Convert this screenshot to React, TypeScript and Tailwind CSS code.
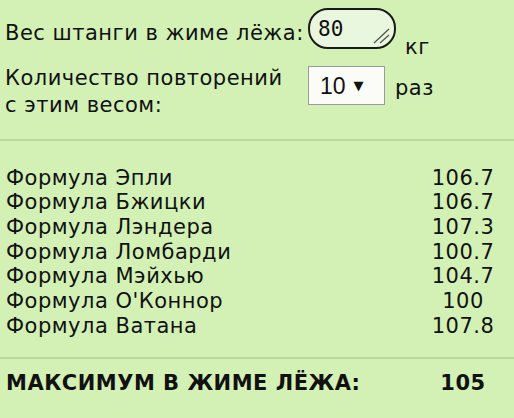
const results = [
  { name: 'Формула Эпли', value: '106.7' },
  { name: 'Формула Бжицки', value: '106.7' },
  { name: 'Формула Лэндера', value: '107.3' },
  { name: 'Формула Ломбарди', value: '100.7' },
  { name: 'Формула Мэйхью', value: '104.7' },
  { name: "Формула О'Коннор", value: '100' },
  { name: 'Формула Ватана', value: '107.8' },
];

export default function App() {
  return (
    <div
      className="w-[514px] h-[418px] bg-[#d3f1b5] text-[#111] text-[21px] tracking-[0.5px] leading-[24px] overflow-hidden"
      style={{ fontFamily: '"DejaVu Sans", Verdana, sans-serif' }}
    >
      <div className="px-[5px] pt-[9px] pb-[20px]">
        <div className="flex items-start h-[56px]">
          <span className="mt-[12px] w-[303px] whitespace-nowrap">Вес штанги в жиме лёжа:</span>
          <div className="relative mt-[-1px] w-[88px] h-[41px] rounded-[20px] border-2 border-[#1a1a1a] bg-[#eaf7df] flex items-center pl-[8px]">
            <span className="text-[21px] tracking-normal" style={{ fontFamily: '"DejaVu Sans Mono", monospace' }}>
              80
            </span>
            {/* resize grip */}
            <svg className="absolute right-[3px] bottom-[3px]" width="18" height="16" viewBox="0 0 18 16">
              <path d="M1 15 L16 1 M7 15 L16 7" stroke="#555" strokeWidth="1.3" />
            </svg>
          </div>
          <span className="mt-[26px] ml-[9px]">кг</span>
        </div>
        <div className="flex items-start">
          <div className="w-[303px] leading-[27px] whitespace-nowrap">
            <div>Количество повторений</div>
            <div>с этим весом:</div>
          </div>
          <div className="mt-[1px] w-[77px] h-[39px] border border-[#9a9a9a] bg-[#fbfbf7] flex items-center pl-[11px] gap-[8px] tracking-normal">
            <span className="text-[23px]" style={{ fontFamily: '"Liberation Sans", Arial, sans-serif' }}>
              10
            </span>
            <span className="text-[13px]">▼</span>
          </div>
          <span className="mt-[11px] ml-[10px]">раз</span>
        </div>
      </div>
      <div className="h-[2px] bg-[#b9d99e]" />
      <div className="px-[6px] pt-[24.5px] pb-[18.5px] leading-[24.7px]">
        {results.map((r) => (
          <div key={r.name} className="flex whitespace-nowrap">
            <span className="flex-1">{r.name}</span>
            <span className="w-[70px] mr-[10px] text-center">{r.value}</span>
          </div>
        ))}
      </div>
      <div className="h-[2px] bg-[#b9d99e]" />
      <div className="px-[6px] pt-[12px] flex font-bold whitespace-nowrap">
        <span className="flex-1">МАКСИМУМ В ЖИМЕ ЛЁЖА:</span>
        <span className="w-[70px] mr-[10px] text-center">105</span>
      </div>
    </div>
  );
}
